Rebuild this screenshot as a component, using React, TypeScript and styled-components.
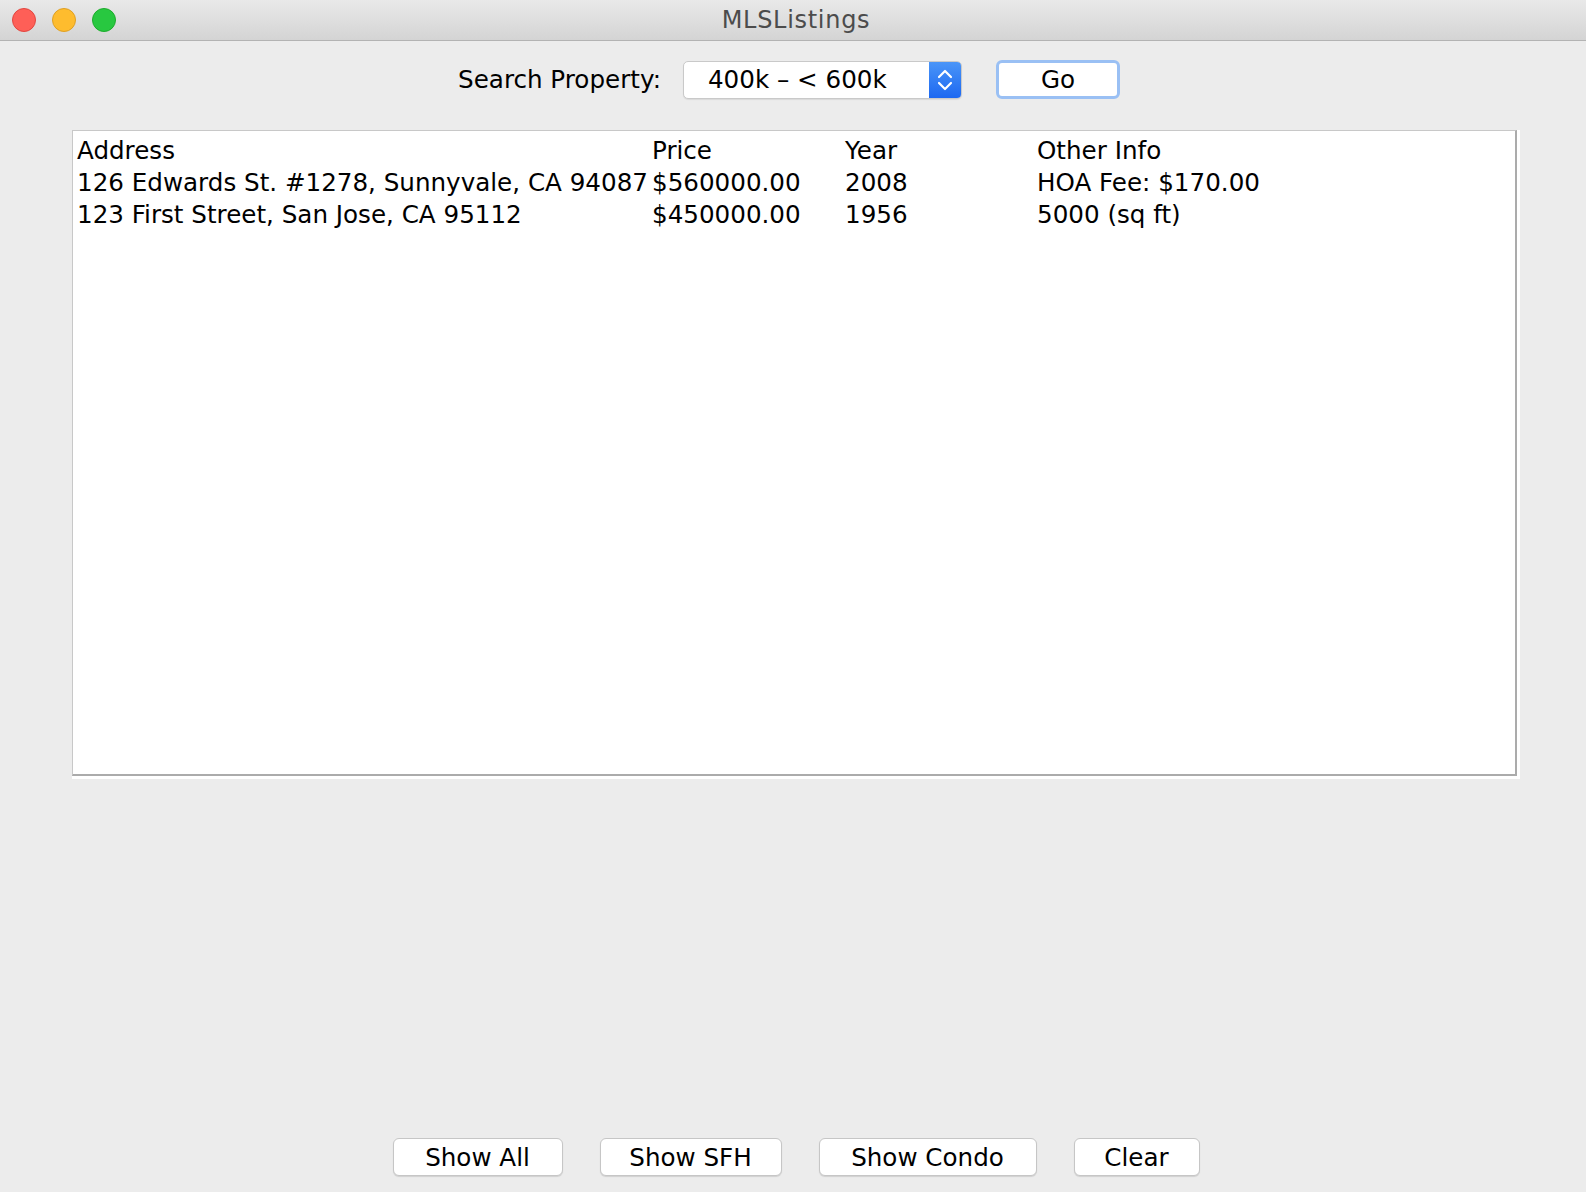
import styled, { createGlobalStyle } from "styled-components";

const GlobalStyle = createGlobalStyle`
  html, body {
    margin: 0;
    padding: 0;
    background: #ececec;
  }

  body {
    font-family: "DejaVu Sans", "Liberation Sans", sans-serif;
    color: #000;
  }
`;

const Window = styled.div`
  width: 1586px;
  height: 1192px;
  display: flex;
  flex-direction: column;
  background: #ececec;
  overflow: hidden;
`;

const TitleBar = styled.header`
  position: relative;
  height: 40px;
  flex-shrink: 0;
  display: flex;
  align-items: center;
  justify-content: center;
  background: linear-gradient(#e9e9e9, #d4d4d4);
  border-bottom: 1px solid #b3b3b3;
`;

const Lights = styled.div`
  position: absolute;
  left: 12px;
  top: 8px;
  display: flex;
  gap: 16px;
`;

const Light = styled.span<{ fill: string; edge: string }>`
  width: 24px;
  height: 24px;
  box-sizing: border-box;
  border-radius: 50%;
  background: ${({ fill }) => fill};
  border: 1px solid ${({ edge }) => edge};
`;

const Title = styled.h1`
  margin: 0 0 0 6px;
  font-size: 24px;
  font-weight: 400;
  letter-spacing: 0.7px;
  color: #4c4c4c;
`;

const SearchRow = styled.div`
  display: flex;
  align-items: center;
  justify-content: center;
  height: 39px;
  margin-top: 19px;
  padding-right: 8px;
  font-size: 24.6px;
`;

const Label = styled.span`
  margin-right: 22px;
`;

const Combo = styled.div`
  width: 279px;
  height: 38px;
  box-sizing: border-box;
  display: flex;
  background: #fff;
  border: 1px solid #c9c9c9;
  border-radius: 5px;
  box-shadow: 0 1px 1px rgba(0, 0, 0, 0.08);
  overflow: hidden;
  margin-right: 34px;
`;

const ComboValue = styled.span`
  flex: 1;
  display: flex;
  align-items: center;
  padding-left: 24px;
`;

const ComboArrow = styled.span`
  width: 32px;
  display: flex;
  align-items: center;
  justify-content: center;
  background: linear-gradient(#4a95f8, #1c68f1);
`;

const Button = styled.button<{ focused?: boolean; width: number }>`
  width: ${({ width }) => width}px;
  height: ${({ focused }) => (focused ? 39 : 38)}px;
  box-sizing: border-box;
  padding: 0;
  font-family: inherit;
  font-size: 24.6px;
  color: #000;
  background: #fff;
  border: ${({ focused }) => (focused ? "3px solid #9ac0f4" : "1px solid #c6c6c6")};
  border-radius: 6px;
  box-shadow: ${({ focused }) => (focused ? "none" : "0 1px 1px rgba(0, 0, 0, 0.12)")};
`;

const ListFrame = styled.div`
  margin: 31px 0 0 72px;
  width: 1448px;
  height: 649px;
  box-sizing: border-box;
  padding: 0 3px 3px 0;
  background: #fff;
`;

const ListArea = styled.div`
  height: 100%;
  box-sizing: border-box;
  border-top: 1px solid #c8c8c8;
  border-left: 1px solid #c8c8c8;
  border-right: 2px solid #ababab;
  border-bottom: 2px solid #ababab;
  padding: 4px 0 0 4px;
  display: grid;
  grid-template-columns: 575px 193px 192px 1fr;
  grid-auto-rows: 32px;
  align-content: start;
  font-size: 24.6px;
  line-height: 32px;
`;

const Cell = styled.span`
  white-space: nowrap;
`;

const Spacer = styled.div`
  flex: 1;
`;

const ButtonBar = styled.div`
  display: flex;
  justify-content: center;
  gap: 37px;
  padding: 0 0 16px 6px;
`;

const rows = [
  ["Address", "Price", "Year", "Other Info"],
  ["126 Edwards St. #1278, Sunnyvale, CA 94087", "$560000.00", "2008", "HOA Fee: $170.00"],
  ["123 First Street, San Jose, CA 95112", "$450000.00", "1956", "5000 (sq ft)"],
];

export default function App() {
  return (
    <Window>
      <GlobalStyle />
      <TitleBar>
        <Lights>
          <Light fill="#fe5f57" edge="#e2463f" />
          <Light fill="#febc2e" edge="#dfa023" />
          <Light fill="#28c840" edge="#1dac2c" />
        </Lights>
        <Title>MLSListings</Title>
      </TitleBar>

      <SearchRow>
        <Label>Search Property:</Label>
        <Combo>
          <ComboValue>400k – &lt; 600k</ComboValue>
          <ComboArrow>
            <svg width="16" height="24" viewBox="0 0 16 24" fill="none" stroke="#fff" strokeWidth="2.2" strokeLinecap="round" strokeLinejoin="round">
              <path d="M2 9 L8 3 L14 9" />
              <path d="M2 15 L8 21 L14 15" />
            </svg>
          </ComboArrow>
        </Combo>
        <Button focused width={124}>Go</Button>
      </SearchRow>

      <ListFrame>
        <ListArea>
          {rows.map((row) => row.map((cell, i) => <Cell key={`${row[0]}-${i}`}>{cell}</Cell>))}
        </ListArea>
      </ListFrame>

      <Spacer />

      <ButtonBar>
        <Button width={170}>Show All</Button>
        <Button width={182}>Show SFH</Button>
        <Button width={218}>Show Condo</Button>
        <Button width={126}>Clear</Button>
      </ButtonBar>
    </Window>
  );
}
